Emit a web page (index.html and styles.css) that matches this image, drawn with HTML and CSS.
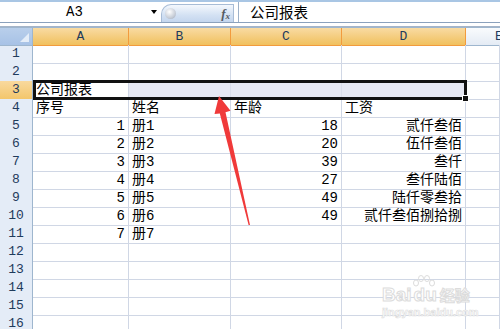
FILE: index.html
```html
<!DOCTYPE html>
<html lang="zh-CN">
<head>
    <meta charset="UTF-8">
    <title>公司报表 - Excel</title>
    <link rel="stylesheet" href="styles.css">
</head>
<body>
    <!-- Formula bar -->
    <div class="formula-bar">
        <div class="name-box">A3</div>
        <div class="name-drop"><span class="drop-arrow"></span></div>
        <div class="fx-zone">
            <div class="capsule">
                <span class="knob"></span>
                <span class="fx">f<sub>x</sub></span>
            </div>
        </div>
        <div class="formula-input">公司报表</div>
    </div>
    <div class="strip"></div>

    <!-- Sheet grid -->
    <div class="sheet">
        <div class="row head">
            <div class="corner"><span class="corner-tri"></span></div>
            <div class="col-head on">A</div>
            <div class="col-head on">B</div>
            <div class="col-head on">C</div>
            <div class="col-head on">D</div>
            <div class="col-head last">E</div>
        </div>
        <div class="row"><div class="rh">1</div><div class="c"></div><div class="c"></div><div class="c"></div><div class="c"></div><div class="c"></div></div>
        <div class="row"><div class="rh">2</div><div class="c"></div><div class="c"></div><div class="c"></div><div class="c"></div><div class="c"></div></div>
        <div class="row"><div class="rh on">3</div><div class="c">公司报表</div><div class="c sel"></div><div class="c sel"></div><div class="c sel"></div><div class="c"></div></div>
        <div class="row"><div class="rh">4</div><div class="c">序号</div><div class="c">姓名</div><div class="c">年龄</div><div class="c">工资</div><div class="c"></div></div>
        <div class="row"><div class="rh">5</div><div class="c num">1</div><div class="c">册1</div><div class="c num">18</div><div class="c num">贰仟叁佰</div><div class="c"></div></div>
        <div class="row"><div class="rh">6</div><div class="c num">2</div><div class="c">册2</div><div class="c num">20</div><div class="c num">伍仟叁佰</div><div class="c"></div></div>
        <div class="row"><div class="rh">7</div><div class="c num">3</div><div class="c">册3</div><div class="c num">39</div><div class="c num">叁仟</div><div class="c"></div></div>
        <div class="row"><div class="rh">8</div><div class="c num">4</div><div class="c">册4</div><div class="c num">27</div><div class="c num">叁仟陆佰</div><div class="c"></div></div>
        <div class="row"><div class="rh">9</div><div class="c num">5</div><div class="c">册5</div><div class="c num">49</div><div class="c num">陆仟零叁拾</div><div class="c"></div></div>
        <div class="row"><div class="rh">10</div><div class="c num">6</div><div class="c">册6</div><div class="c num">49</div><div class="c num">贰仟叁佰捌拾捌</div><div class="c"></div></div>
        <div class="row"><div class="rh">11</div><div class="c num">7</div><div class="c">册7</div><div class="c"></div><div class="c"></div><div class="c"></div></div>
        <div class="row"><div class="rh">12</div><div class="c"></div><div class="c"></div><div class="c"></div><div class="c"></div><div class="c"></div></div>
        <div class="row"><div class="rh">13</div><div class="c"></div><div class="c"></div><div class="c"></div><div class="c"></div><div class="c"></div></div>
        <div class="row"><div class="rh">14</div><div class="c"></div><div class="c"></div><div class="c"></div><div class="c"></div><div class="c"></div></div>
        <div class="row"><div class="rh">15</div><div class="c"></div><div class="c"></div><div class="c"></div><div class="c"></div><div class="c"></div></div>
        <div class="row"><div class="rh">16</div><div class="c"></div><div class="c"></div><div class="c"></div><div class="c"></div><div class="c"></div></div>
    </div>

    <!-- Selection A3:D3 -->
    <div class="selection"><span class="fill-handle"></span></div>

    <!-- Red pointer arrow -->
    <svg class="arrow" width="500" height="329" viewBox="0 0 500 329">
        <polygon points="219,96 230.5,110.8 225.5,112.2 250,225 248.6,225 219.8,113.6 214.5,114" fill="#f03a3a"/>
    </svg>

    <!-- Watermark -->
    <div class="watermark">
        <svg class="paw" width="26" height="16" viewBox="0 0 26 16">
            <g fill="none" stroke="#dcdcdc" stroke-width="1">
                <ellipse cx="5" cy="8" rx="2.5" ry="3"/>
                <ellipse cx="10" cy="3.5" rx="2.5" ry="3"/>
                <ellipse cx="16" cy="3.5" rx="2.5" ry="3"/>
                <ellipse cx="21" cy="8" rx="2.5" ry="3"/>
            </g>
        </svg>
        <div class="wm-logo"><span>Bai</span><span class="du">du</span><span class="jy">经验</span></div>
        <div class="wm-url">jingyan.baidu.com</div>
    </div>
</body>
</html>
```

FILE: styles.css
```css
/* Global */
body {
    margin: 0;
    width: 500px;
    height: 329px;
    overflow: hidden;
    position: relative;
    background-color: #ffffff;
    font-family: "Liberation Mono", "Noto Sans CJK SC", monospace;
    font-size: 14px;
    color: #000;
}

/* Formula bar */
.formula-bar {
    display: flex;
    height: 23px;
    box-sizing: border-box;
    border-top: 2px solid #a9c6e4;
    border-bottom: 1px solid #8ba1bc;
    background-color: #ffffff;
}

.name-box {
    width: 145px;
    text-align: center;
    line-height: 20px;
    padding-left: 2px;
}

.name-drop {
    width: 14px;
    display: flex;
    align-items: center;
    justify-content: center;
}

.drop-arrow {
    width: 0;
    height: 0;
    border-left: 3.5px solid transparent;
    border-right: 3.5px solid transparent;
    border-top: 4px solid #000;
}

.fx-zone {
    width: 77px;
    display: flex;
    align-items: flex-end;
    border-right: 1px solid #9db1c9;
}

.capsule {
    width: 73px;
    height: 18px;
    box-sizing: border-box;
    border: 1px solid #a7bcd6;
    border-bottom: none;
    border-radius: 10px 0 0 0;
    background: linear-gradient(#f4f8fd, #d3e1f3 60%, #c4d6ee);
    display: flex;
    align-items: center;
    justify-content: space-between;
    padding: 0 3px 0 3px;
}

.knob {
    width: 11px;
    height: 11px;
    border-radius: 50%;
    background: radial-gradient(circle at 40% 35%, #ffffff, #c8ced8 60%, #9aa4b3);
}

.fx {
    font-family: "Liberation Serif", serif;
    font-style: italic;
    font-weight: bold;
    font-size: 13px;
    color: #555a62;
}

.fx sub {
    font-size: 9px;
    vertical-align: -1px;
}

.formula-input {
    flex: 1;
    padding-left: 11px;
    line-height: 20px;
    font-family: "Noto Sans CJK SC", sans-serif;
    font-size: 14.5px;
}

.strip {
    height: 4px;
    box-sizing: border-box;
    border-bottom: 1px solid #a5b4c8;
}

/* Sheet */
.sheet {
    border-top: 1px solid #9eb6ce;
}

.row {
    display: grid;
    grid-template-columns: 33px 96px 102px 111px 124px 1fr;
    height: 18px;
}

.row.head {
    height: 17px;
}

.corner {
    box-sizing: border-box;
    border-right: 1px solid #9eb6ce;
    border-bottom: 1px solid #9eb6ce;
    background: linear-gradient(#b9cfeb, #a7c2e6);
    position: relative;
}

.corner-tri {
    position: absolute;
    right: 3px;
    bottom: 3px;
    width: 0;
    height: 0;
    border-left: 9px solid transparent;
    border-bottom: 9px solid #e4edf8;
}

.col-head {
    box-sizing: border-box;
    border-right: 1px solid #9eb6ce;
    border-bottom: 1px solid #9eb6ce;
    background: linear-gradient(#f9fbfd, #e4ebf4);
    text-align: center;
    line-height: 17px;
    font-size: 13px;
    color: #1f3b5c;
}

.col-head.on {
    border-right-color: #f29b3d;
    border-bottom-color: #f29b3d;
    background: linear-gradient(#f9dba3, #f3c872 70%, #f1c15e);
}

.col-head.last {
    text-align: left;
    padding-left: 29px;
    border-right: none;
    overflow: hidden;
}

.rh {
    box-sizing: border-box;
    border-right: 1px solid #9eb6ce;
    border-bottom: 1px solid #c4d1e3;
    background-color: #e4ecf7;
    text-align: center;
    line-height: 18px;
    font-size: 13px;
    color: #1f3b5c;
}

.rh.on {
    background: linear-gradient(#f9d99e, #f3c66c);
    border-bottom-color: #f29b3d;
}

.c {
    box-sizing: border-box;
    border-right: 1px solid #d0d7e5;
    border-bottom: 1px solid #d0d7e5;
    padding: 1px 3px 0 3px;
    line-height: 17px;
    white-space: nowrap;
    overflow: hidden;
}

.c.num {
    text-align: right;
    padding-right: 3px;
}

.c.sel {
    background-color: #e6e8f3;
    border-right-color: #dadeeb;
}

/* Selection overlay */
.selection {
    position: absolute;
    left: 33px;
    top: 80px;
    width: 434px;
    height: 20px;
    box-sizing: border-box;
    border: 3px solid #111;
}

.fill-handle {
    position: absolute;
    right: -5px;
    bottom: -5px;
    width: 5px;
    height: 5px;
    background-color: #111;
    border: 1px solid #fff;
}

/* Arrow overlay */
.arrow {
    position: absolute;
    left: 0;
    top: 0;
}

/* Watermark */
.watermark {
    position: absolute;
    left: 382px;
    top: 274px;
    width: 92px;
    color: #ffffff;
}

.paw {
    position: absolute;
    left: 29px;
    top: 1px;
}

.wm-logo {
    margin-top: 12px;
    font-family: "Liberation Sans", sans-serif;
    font-weight: bold;
    font-size: 19px;
    line-height: 18px;
    -webkit-text-stroke: 1px #dcdcdc;
    display: flex;
    align-items: flex-end;
}

.wm-logo .du {
    margin-left: 2px;
}

.wm-logo .jy {
    font-family: "Noto Sans CJK SC", sans-serif;
    font-size: 15px;
    margin-left: 3px;
}

.wm-url {
    font-family: "Liberation Sans", sans-serif;
    font-weight: bold;
    font-size: 11px;
    line-height: 12px;
    margin-top: 2px;
    -webkit-text-stroke: 0.6px #dcdcdc;
}
```
